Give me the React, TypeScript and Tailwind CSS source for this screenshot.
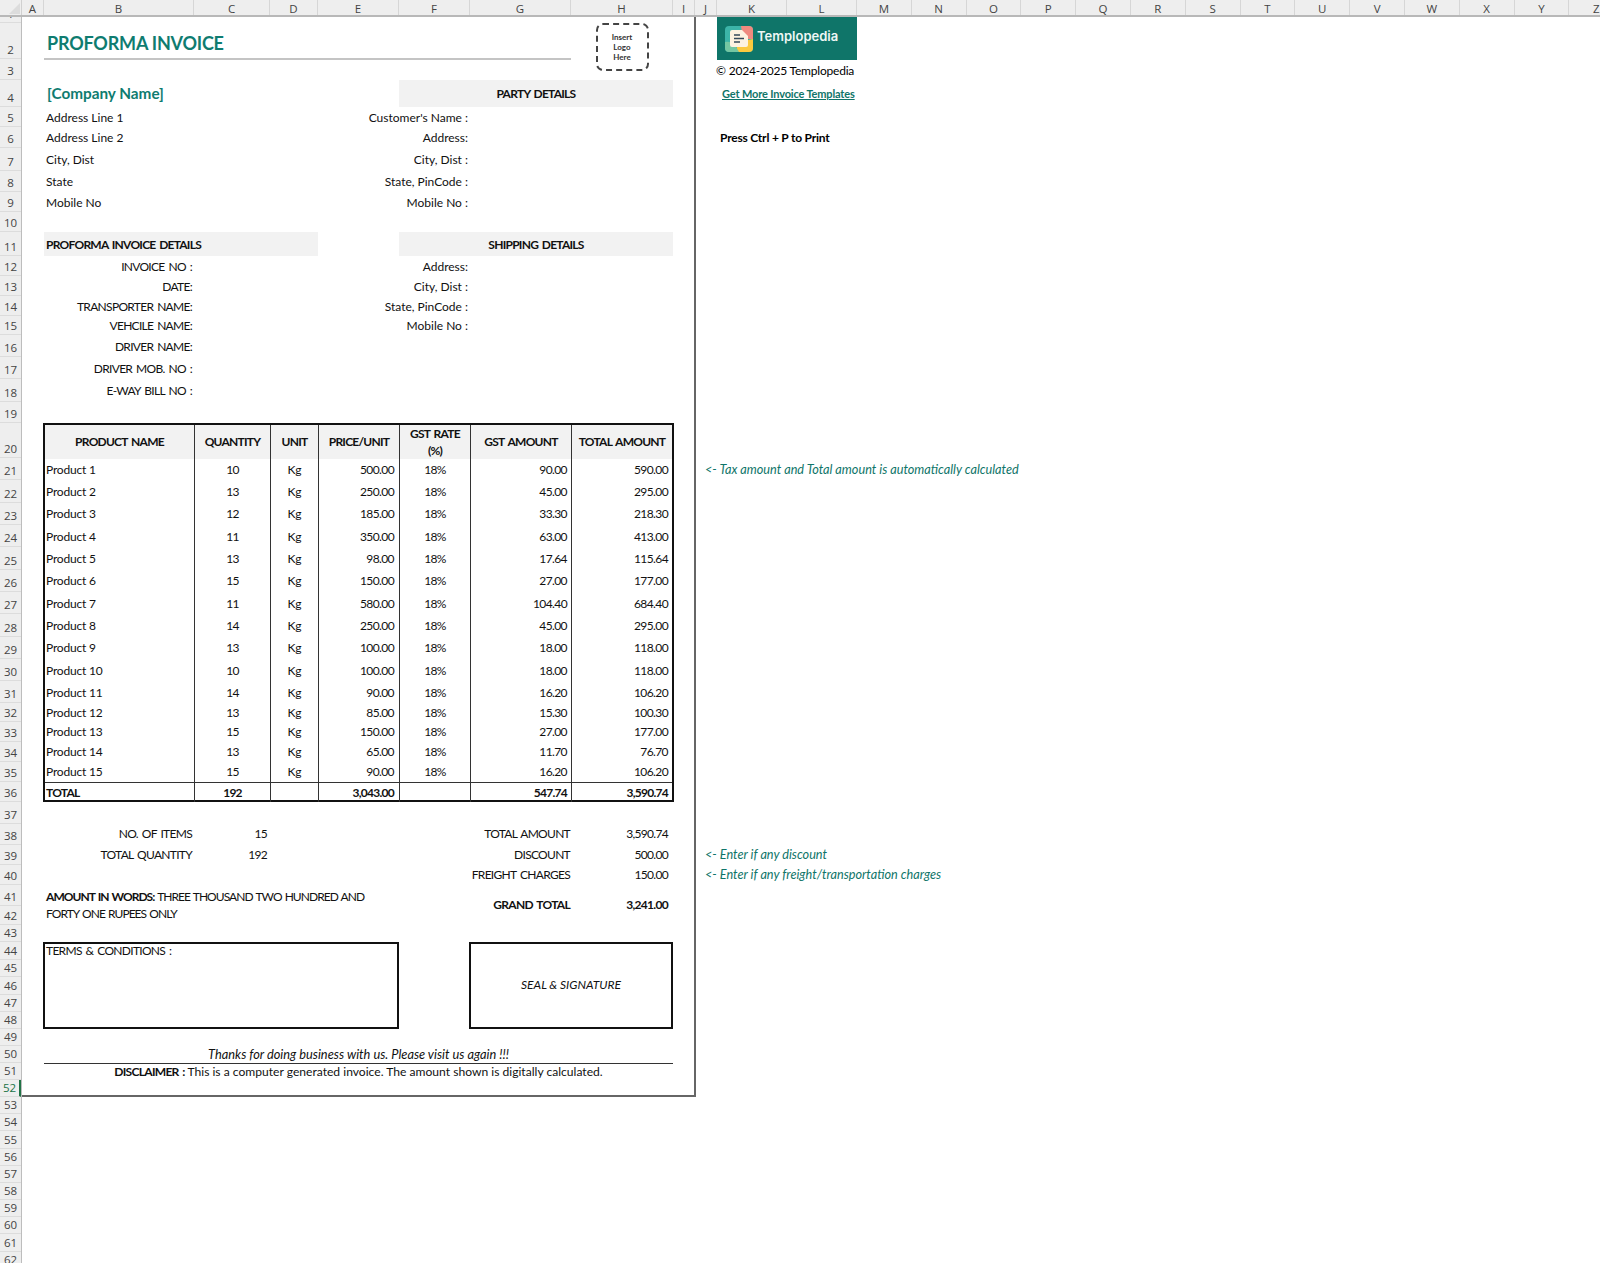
const COLS = 'grid grid-cols-[150px_76px_48px_81px_71px_101px_102px]';
const TABLE_COLS = 'grid grid-cols-[150px_76px_48px_81px_71px_101px_100px]';
// Lato runs wider than the sheet's font on capitals and digits
const CAPS = 'tracking-[-0.7px] [word-spacing:1.5px]';
const BOLD_CAPS = 'font-bold tracking-[-0.75px] [word-spacing:1.5px]';
const NUM = 'tracking-[-0.6px]';

const columns: [string, string][] = [
  ['A', 'w-[22px]'], ['B', 'w-[150px]'], ['C', 'w-[76px]'], ['D', 'w-[48px]'], ['E', 'w-[81px]'], ['F', 'w-[71px]'],
  ['G', 'w-[101px]'], ['H', 'w-[102px]'], ['I', 'w-[22px]'], ['J', 'w-[22px]'], ['K', 'w-[70px]'], ['L', 'w-[70px]'],
  ['M', 'w-[54.8px]'], ['N', 'w-[54.8px]'], ['O', 'w-[54.8px]'], ['P', 'w-[54.8px]'], ['Q', 'w-[54.8px]'], ['R', 'w-[54.8px]'],
  ['S', 'w-[54.8px]'], ['T', 'w-[54.8px]'], ['U', 'w-[54.8px]'], ['V', 'w-[54.8px]'], ['W', 'w-[54.8px]'], ['X', 'w-[54.8px]'],
  ['Y', 'w-[54.8px]'], ['Z', 'w-[54.8px]'],
];

const rowHeights = [
  'h-[6px]', 'h-[36px]', 'h-[21px]', 'h-[27px]', 'h-[20px]', 'h-[21px]', 'h-[23px]', 'h-[21px]', 'h-[20px]', 'h-[20px]',
  'h-[24px]', 'h-[20px]', 'h-[20px]', 'h-[20px]', 'h-[19px]', 'h-[22px]', 'h-[22px]', 'h-[23px]', 'h-[21px]', 'h-[35px]',
  'h-[22.33px]', 'h-[22.33px]', 'h-[22.33px]', 'h-[22.33px]', 'h-[22.33px]', 'h-[22.33px]', 'h-[22.33px]', 'h-[22.33px]', 'h-[22.33px]', 'h-[22.33px]',
  'h-[21.7px]', 'h-[19px]', 'h-[20px]', 'h-[20px]', 'h-[20px]', 'h-[20px]', 'h-[22px]', 'h-[21px]', 'h-[20px]', 'h-[20px]',
  'h-[21px]', 'h-[19px]', 'h-[17px]', 'h-[18px]', 'h-[17px]', 'h-[18px]', 'h-[17px]', 'h-[17px]', 'h-[17px]', 'h-[17px]',
  'h-[17px]', 'h-[17px]', 'h-[17.2px]', 'h-[17.2px]', 'h-[17.2px]', 'h-[17.2px]', 'h-[17.2px]', 'h-[17.2px]', 'h-[17.2px]', 'h-[17.2px]',
  'h-[17.2px]', 'h-[17.2px]',
];

const products = [
  ['Product 1', '10', '500.00', '90.00', '590.00'],
  ['Product 2', '13', '250.00', '45.00', '295.00'],
  ['Product 3', '12', '185.00', '33.30', '218.30'],
  ['Product 4', '11', '350.00', '63.00', '413.00'],
  ['Product 5', '13', '98.00', '17.64', '115.64'],
  ['Product 6', '15', '150.00', '27.00', '177.00'],
  ['Product 7', '11', '580.00', '104.40', '684.40'],
  ['Product 8', '14', '250.00', '45.00', '295.00'],
  ['Product 9', '13', '100.00', '18.00', '118.00'],
  ['Product 10', '10', '100.00', '18.00', '118.00'],
  ['Product 11', '14', '90.00', '16.20', '106.20'],
  ['Product 12', '13', '85.00', '15.30', '100.30'],
  ['Product 13', '15', '150.00', '27.00', '177.00'],
  ['Product 14', '13', '65.00', '11.70', '76.70'],
  ['Product 15', '15', '90.00', '16.20', '106.20'],
];

// row heights inside the table, first 10 are the tall ones
const productRowH = [
  'h-[22.33px]', 'h-[22.33px]', 'h-[22.33px]', 'h-[22.33px]', 'h-[22.33px]', 'h-[22.33px]', 'h-[22.33px]', 'h-[22.33px]', 'h-[22.33px]', 'h-[22.33px]',
  'h-[21.7px]', 'h-[19px]', 'h-[20px]', 'h-[20px]', 'h-[20px]',
];

function ColumnHeader() {
  return (
    <div className="flex h-[17px] overflow-hidden border-b-2 border-[#b8b8b8] bg-[#eeeeee] font-['Open_Sans'] text-[11.5px] text-[#444]">
      <div className="relative w-[22px] shrink-0 border-r border-[#d0d0d0]">
        <svg className="absolute right-[1px] bottom-[1px]" width="11" height="11" viewBox="0 0 11 11">
          <path d="M11 0V11H0Z" fill="#dcdcdc" />
        </svg>
      </div>
      {columns.map(([name, w]) => (
        <div key={name} className={`${w} flex shrink-0 items-center justify-center border-r border-[#d6d6d6] pt-[2px]`}>{name}</div>
      ))}
    </div>
  );
}

function RowHeader() {
  return (
    <div className="w-[22px] shrink-0 border-r border-[#bdbdbd] bg-[#eeeeee] font-['Open_Sans'] text-[11.5px] text-[#444]">
      {rowHeights.map((h, i) => (
        <div
          key={i}
          className={`${h} flex items-end justify-center overflow-hidden border-b border-[#dcdcdc] leading-[16px] ${i === 51 ? 'border-r-2 border-r-[#217346] text-[#217346]' : ''}`}
        >
          {i + 1}
        </div>
      ))}
    </div>
  );
}

function Logo() {
  return (
    <div className="ml-[21px] flex h-[43px] w-[140px] items-center gap-[4px] bg-[#0f7569] pl-[8px]">
      <svg width="28" height="26" viewBox="0 0 28 26">
        <rect width="28" height="26" rx="4" fill="#3cb4a8" />
        <path d="M16 0H24Q28 0 28 4V13H18Z" fill="#ef8a7f" />
        <path d="M28 13V22Q28 26 24 26H10L14 16Z" fill="#fcc93f" />
        <path d="M0 16Q6 15 10 19L14 26H4Q0 26 0 22Z" fill="#74c6a2" />
        <path d="M7 4H17L23 10V19Q23 21 21 21H7Q5 21 5 19V6Q5 4 7 4Z" fill="#fdf2e0" />
        <path d="M9 9H15M9 12.5H19M9 16H15" stroke="#34495a" strokeWidth="1.6" />
      </svg>
      <span className="-mt-[3px] font-['Inter'] text-[13px] font-semibold text-[#eef7f5]">Templopedia</span>
    </div>
  );
}

function SidePanel() {
  return (
    <div className="flex flex-col text-[12px] text-black">
      <Logo />
      <div className="ml-[20px] flex h-[22px] items-center tracking-[-0.2px]">© 2024-2025 Templopedia</div>
      <div className="ml-[26px] flex h-[24px] items-center text-[11px] font-bold tracking-[-0.15px] text-[#0f7569] underline">Get More Invoice Templates</div>
      <div className="mt-[21px] ml-[24px] flex h-[22px] items-center font-bold tracking-[-0.2px]">Press Ctrl + P to Print</div>
      <div className="mt-[310px] ml-[9px] flex h-[22px] items-center text-[12.7px] text-[#0f7569] italic">{'<- Tax amount and Total amount is automatically calculated'}</div>
      <div className="mt-[364px] ml-[9px] flex h-[20px] items-center text-[12.7px] text-[#0f7569] italic">{'<- Enter if any discount'}</div>
      <div className="ml-[9px] flex h-[20px] items-center text-[12.7px] text-[#0f7569] italic">{'<- Enter if any freight/transportation charges'}</div>
    </div>
  );
}

function TitleBlock() {
  return (
    <div className="flex h-[63px]">
      <div className="h-[43px] w-[527px] border-b-2 border-[#c4c4c4] pt-[14px] pl-[3px] text-[18px] leading-[24px] font-bold tracking-[-0.2px] text-[#0f7c70]">
        PROFORMA INVOICE
      </div>
      <div className="flex w-[102px] justify-center pt-[6px]">
        <div className="flex h-[48px] w-[53px] items-center justify-center rounded-[7px] border-2 border-dashed border-[#444] text-center text-[8px] leading-[10px] font-bold text-[#333]">
          Insert<br />Logo<br />Here
        </div>
      </div>
    </div>
  );
}

function InfoRow({ h, left, right, caps }: { h: string; left?: string; right?: string; caps?: boolean }) {
  return (
    <div className={`${COLS} ${h} items-center pt-px`}>
      <div className={caps ? `pr-[2px] text-right ${CAPS}` : 'pl-[2px]'}>{left}</div>
      <div className="col-span-4 pr-[2px] text-right">{right}</div>
    </div>
  );
}

function SectionHead({ h, title, left, details }: { h: string; title: string; left?: string; details?: boolean }) {
  return (
    <div className={`${COLS} ${h}`}>
      {details ? (
        <div className={`col-span-3 flex items-center bg-[#f2f2f2] pt-px pl-[2px] ${BOLD_CAPS}`}>{left}</div>
      ) : (
        <div className="col-span-3 flex items-center pl-[3px] text-[15.3px] font-bold text-[#0f7c70]">{left}</div>
      )}
      <div className={`col-span-3 col-start-5 flex items-center justify-center bg-[#f2f2f2] pt-px ${BOLD_CAPS}`}>{title}</div>
    </div>
  );
}

function ProductTable() {
  const cell = 'flex items-center border-r border-[#333] pt-px';
  const headCell = `flex items-center border-r border-[#333] justify-center text-center bg-[#f2f2f2] ${BOLD_CAPS}`;
  return (
    <div className="-ml-px w-[631px] border-2 border-[#111]">
      <div className={`${TABLE_COLS} h-[33px] border-b-2 border-[#333]`}>
        <div className={headCell}>PRODUCT NAME</div>
        <div className={headCell}>QUANTITY</div>
        <div className={headCell}>UNIT</div>
        <div className={headCell}>PRICE/UNIT</div>
        <div className={`${headCell} leading-[17px]`}>GST RATE<br />(%)</div>
        <div className={headCell}>GST AMOUNT</div>
        <div className={`flex items-center justify-center bg-[#f2f2f2] ${BOLD_CAPS}`}>TOTAL AMOUNT</div>
      </div>
      {products.map(([name, qty, price, gst, total], i) => (
        <div key={name} className={`${TABLE_COLS} ${productRowH[i]}`}>
          <div className={`${cell} pl-[1px] tracking-[-0.2px]`}>{name}</div>
          <div className={`${cell} justify-center ${NUM}`}>{qty}</div>
          <div className={`${cell} justify-center`}>Kg</div>
          <div className={`${cell} justify-end pr-[5px] ${NUM}`}>{price}</div>
          <div className={`${cell} justify-center ${NUM}`}>18%</div>
          <div className={`${cell} justify-end pr-[4px] ${NUM}`}>{gst}</div>
          <div className={`flex items-center justify-end pt-px pr-[4px] ${NUM}`}>{total}</div>
        </div>
      ))}
      <div className={`${TABLE_COLS} h-[18px] border-t border-[#333] ${BOLD_CAPS}`}>
        <div className={`${cell} pl-[1px]`}>TOTAL</div>
        <div className={`${cell} justify-center`}>192</div>
        <div className={cell} />
        <div className={`${cell} justify-end pr-[5px]`}>3,043.00</div>
        <div className={cell} />
        <div className={`${cell} justify-end pr-[4px]`}>547.74</div>
        <div className="flex items-center justify-end pt-px pr-[4px]">3,590.74</div>
      </div>
    </div>
  );
}

function Totals() {
  const rows: [string, string, string, string, string][] = [
    ['h-[21px]', 'NO. OF ITEMS', '15', 'TOTAL AMOUNT', '3,590.74'],
    ['h-[20px]', 'TOTAL QUANTITY', '192', 'DISCOUNT', '500.00'],
    ['h-[20px]', '', '', 'FREIGHT CHARGES', '150.00'],
  ];
  return (
    <div className={`mt-[22px] ${CAPS}`}>
      {rows.map(([h, a, b, c, d]) => (
        <div key={c} className={`${COLS} ${h} items-center`}>
          <div className="pr-[2px] text-right">{a}</div>
          <div className="pr-[3px] text-right">{b}</div>
          <div className="col-span-3" />
          <div className="pr-[1px] text-right whitespace-nowrap">{c}</div>
          <div className="pr-[5px] text-right">{d}</div>
        </div>
      ))}
      <div className={`${COLS} h-[40px] items-center`}>
        <div className="col-span-5 pl-[2px] leading-[17px] tracking-[-0.95px] [word-spacing:1px]">
          <b>AMOUNT IN WORDS:</b> THREE THOUSAND TWO HUNDRED AND<br />FORTY ONE RUPEES ONLY
        </div>
        <div className="pr-[1px] text-right font-bold">GRAND TOTAL</div>
        <div className="pr-[5px] text-right font-bold">3,241.00</div>
      </div>
    </div>
  );
}

function Boxes() {
  return (
    <div className={`${COLS} mt-[17px] h-[87px]`}>
      <div className={`col-span-4 -ml-px border-2 border-[#111] pl-[1px] leading-[14px] ${CAPS}`}>TERMS &amp; CONDITIONS :</div>
      <div className="col-span-2 col-start-6 -ml-px flex items-center justify-center border-2 border-[#111] italic">SEAL &amp; SIGNATURE</div>
    </div>
  );
}

function Invoice() {
  return (
    <div className="h-[1080px] w-[674px] shrink-0 border-r-2 border-b-2 border-[#666] pl-[22px] font-['Lato'] text-[12px] text-[#111]">
      <TitleBlock />
      <SectionHead h="h-[27px]" left="[Company Name]" title="PARTY DETAILS" />
      <InfoRow h="h-[20px]" left="Address Line 1" right="Customer's Name :" />
      <InfoRow h="h-[21px]" left="Address Line 2" right="Address:" />
      <InfoRow h="h-[23px]" left="City, Dist" right="City, Dist :" />
      <InfoRow h="h-[21px]" left="State" right="State, PinCode :" />
      <InfoRow h="h-[20px]" left="Mobile No" right="Mobile No :" />
      <div className="h-[20px]" />
      <SectionHead h="h-[24px]" left="PROFORMA INVOICE DETAILS" details title="SHIPPING DETAILS" />
      <InfoRow h="h-[20px]" caps left="INVOICE NO :" right="Address:" />
      <InfoRow h="h-[20px]" caps left="DATE:" right="City, Dist :" />
      <InfoRow h="h-[20px]" caps left="TRANSPORTER NAME:" right="State, PinCode :" />
      <InfoRow h="h-[19px]" caps left="VEHCILE NAME:" right="Mobile No :" />
      <InfoRow h="h-[22px]" caps left="DRIVER NAME:" />
      <InfoRow h="h-[22px]" caps left="DRIVER MOB. NO :" />
      <InfoRow h="h-[23px]" caps left="E-WAY BILL NO :" />
      <div className="h-[21px]" />
      <ProductTable />
      <Totals />
      <Boxes />
      <div className="mt-[18px] flex h-[17px] w-[629px] items-center justify-center border-b border-[#333] text-[12.8px] italic">
        Thanks for doing business with us. Please visit us again !!!
      </div>
      <div className="flex h-[17px] w-[629px] items-center justify-center text-[12.1px]">
        <span><b className={BOLD_CAPS}>DISCLAIMER :</b> This is a computer generated invoice. The amount shown is digitally calculated.</span>
      </div>
    </div>
  );
}

export default function App() {
  return (
    <div className="h-[1263px] w-[1600px] overflow-hidden bg-white font-['Lato',sans-serif]">
      <ColumnHeader />
      <div className="flex">
        <RowHeader />
        <Invoice />
        <SidePanel />
      </div>
    </div>
  );
}
